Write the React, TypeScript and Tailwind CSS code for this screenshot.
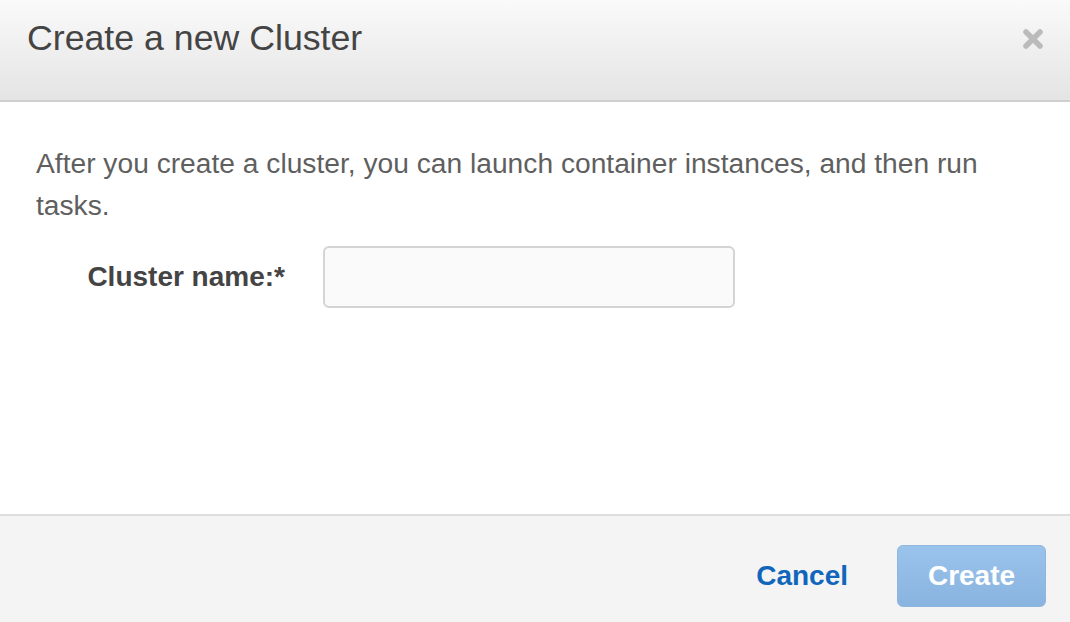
import React from "react";

export default function App() {
  return (
    <div
      className="w-[1070px] h-[622px] flex flex-col bg-white overflow-hidden"
      style={{ fontFamily: '"Liberation Sans", Arial, sans-serif' }}
    >
      {/* Header */}
      <div className="h-[102px] flex items-center justify-between pl-[27px] pr-[26px] bg-gradient-to-b from-[#fafafa] to-[#e4e4e4] border-b-2 border-[#cfcfcf]">
        <h1 className="text-[35.7px] text-[#444] leading-none -mt-[23px]">Create a new Cluster</h1>
        <button className="-mt-[22px] text-[#bbb]" aria-label="Close">
          <svg width="22" height="22" viewBox="0 0 22 22">
            <path d="M4 4 L18 18 M18 4 L4 18" stroke="currentColor" strokeWidth="5.5" strokeLinecap="round" />
          </svg>
        </button>
      </div>

      {/* Body */}
      <div className="flex-1 pl-[36px] pr-[40px] pt-[40px]">
        <p className="text-[28.2px] leading-[42px] text-[#5f5f5f]">
          After you create a cluster, you can launch container instances, and then run tasks.
        </p>
        <div className="flex items-center mt-[20px]">
          <label className="w-[250px] text-right pr-[1px] text-[28px] font-bold text-[#444]">Cluster name:*</label>
          <input
            type="text"
            className="ml-[37px] w-[412px] h-[62px] rounded-[6px] border-2 border-[#d4d4d4] bg-[#fafafa] outline-none"
          />
        </div>
      </div>

      {/* Footer */}
      <div className="h-[108px] flex items-start justify-end gap-[49px] pr-[24px] pt-[29px] bg-[#f4f4f4] border-t-2 border-[#dddddd]">
        <button className="h-[62px] text-[28px] font-bold text-[#1166bb]">Cancel</button>
        <button className="w-[149px] h-[62px] rounded-[6px] bg-gradient-to-b from-[#9ac3ec] to-[#89b4df] border border-[#8fb6de] text-white text-[28px] font-bold">
          Create
        </button>
      </div>
    </div>
  );
}
